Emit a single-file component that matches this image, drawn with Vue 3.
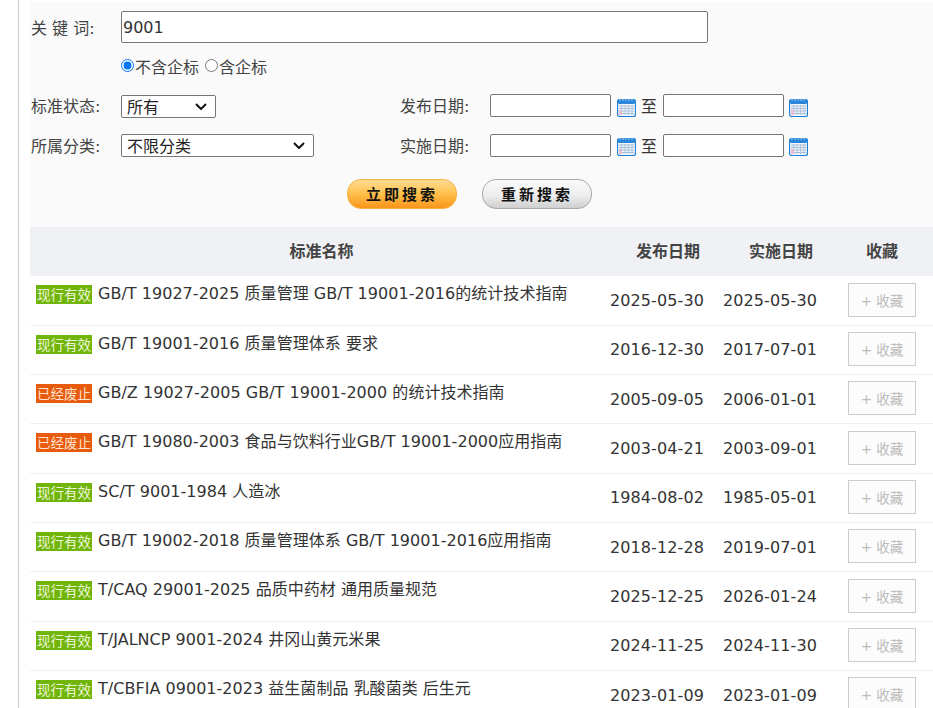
<template>
  <div class="page">
    <form class="search" @submit.prevent>
      <div class="line keyword">
        <label class="lab">关 键 词:</label>
        <input class="kw" type="text" value="9001" />
      </div>
      <div class="line radios">
        <label><input type="radio" name="logo" checked />不含企标</label>
        <label><input type="radio" name="logo" />含企标</label>
      </div>
      <div class="line status">
        <label class="lab">标准状态:</label>
        <div class="pick">
          <div class="sel sel-s">
            <select><option>所有</option></select>
            <svg viewBox="0 0 12 7"><path d="M1 1l5 5 5-5" /></svg>
          </div>
        </div>
        <label class="lab">发布日期:</label>
        <input class="date" type="text" />
        <svg class="cal" viewBox="0 0 19 19"><use href="#cal-icon" /></svg>
        <span class="to">至</span>
        <input class="date" type="text" />
        <svg class="cal cal-last" viewBox="0 0 19 19"><use href="#cal-icon" /></svg>
      </div>
      <div class="line kind">
        <label class="lab">所属分类:</label>
        <div class="pick">
          <div class="sel sel-l">
            <select><option>不限分类</option></select>
            <svg viewBox="0 0 12 7"><path d="M1 1l5 5 5-5" /></svg>
          </div>
        </div>
        <label class="lab">实施日期:</label>
        <input class="date" type="text" />
        <svg class="cal" viewBox="0 0 19 19"><use href="#cal-icon" /></svg>
        <span class="to">至</span>
        <input class="date" type="text" />
        <svg class="cal cal-last" viewBox="0 0 19 19"><use href="#cal-icon" /></svg>
      </div>
      <div class="btns">
        <button class="btn orange">立即搜索</button>
        <button class="btn grey">重新搜索</button>
      </div>
    </form>

    <div class="thead">
      <div class="th-name">标准名称</div>
      <div class="th-pub">发布日期</div>
      <div class="th-imp">实施日期</div>
      <div class="th-fav">收藏</div>
    </div>
    <div v-for="row in rows" class="row">
      <div class="name">
        <span class="badge" :class="{ off: row.off }">{{ row.off ? '已经废止' : '现行有效' }}</span>
        <a>{{ row.title }}</a>
      </div>
      <div class="d">{{ row.pub }}</div>
      <div class="d">{{ row.imp }}</div>
      <div class="fav"><button>+ 收藏</button></div>
    </div>

    <svg width="0" height="0" class="defs">
      <symbol id="cal-icon" viewBox="0 0 19 19">
        <rect x="0.5" y="1.5" width="18" height="17" rx="2" fill="#f2f6fa" stroke="#1f80d8" stroke-width="1.2" />
        <rect x="1" y="1" width="17" height="5" rx="1.500" fill="#2a86d8" />
        <path d="M3 1v2M6 1v2M9 1v2M12 1v2M15 1v2" stroke="#9fcbf0" />
        <path d="M2 8h15M2 10.5h15M2 13h15M2 15.5h15" stroke="#a2bcd8" />
        <path d="M4.500 7v10M8 7v10M11.500 7v10M15 7v10" stroke="#b0c6de" />
        <rect x="2" y="12" width="3" height="5" fill="#e6bccf" />
      </symbol>
    </svg>
  </div>
</template>

<script setup>
const rows = [
  { title: 'GB/T 19027-2025 质量管理 GB/T 19001-2016的统计技术指南', pub: '2025-05-30', imp: '2025-05-30' },
  { title: 'GB/T 19001-2016 质量管理体系 要求', pub: '2016-12-30', imp: '2017-07-01' },
  { title: 'GB/Z 19027-2005 GB/T 19001-2000 的统计技术指南', pub: '2005-09-05', imp: '2006-01-01', off: true },
  { title: 'GB/T 19080-2003 食品与饮料行业GB/T 19001-2000应用指南', pub: '2003-04-21', imp: '2003-09-01', off: true },
  { title: 'SC/T 9001-1984 人造冰', pub: '1984-08-02', imp: '1985-05-01' },
  { title: 'GB/T 19002-2018 质量管理体系 GB/T 19001-2016应用指南', pub: '2018-12-28', imp: '2019-07-01' },
  { title: 'T/CAQ 29001-2025 品质中药材 通用质量规范', pub: '2025-12-25', imp: '2026-01-24' },
  { title: 'T/JALNCP 9001-2024 井冈山黄元米果', pub: '2024-11-25', imp: '2024-11-30' },
  { title: 'T/CBFIA 09001-2023 益生菌制品 乳酸菌类 后生元', pub: '2023-01-09', imp: '2023-01-09' }
]
</script>

<style>
html, body { overflow: hidden; background: #fff; }
</style>

<style scoped>
.page {
  height: 708px;
  overflow: hidden;
  margin-left: 18px;
  padding-left: 11px;
  border-left: 1px solid #ccc;
  box-sizing: border-box;
  font-family: "DejaVu Sans", "Noto Sans CJK SC", sans-serif;
  color: #333;
}
.defs { position: absolute; }
.search {
  margin-top: 2px;
  height: 225px;
  padding: 9px 0 0 1px;
  box-sizing: border-box;
  background: #fafafa;
}
.line { display: flex; align-items: center; }
.lab {
  width: 90px;
  flex: none;
  font-size: 16px;
  color: #444;
}
.kw {
  width: 587px;
  height: 32px;
  box-sizing: border-box;
  padding: 0 1px;
  font: 16px "DejaVu Sans", sans-serif;
  color: #333;
  border: 1px solid #767676;
  border-radius: 2px;
}
.radios {
  margin: 12px 0 0 90px;
  height: 22px;
  font-size: 16px;
  color: #444;
}
.radios label { display: flex; align-items: center; margin-right: 6px; }
.radios input { margin: 0 1px 0 0; width: 13px; height: 13px; position: relative; top: -1px; }
.status { margin-top: 16px; height: 24px; }
.kind { margin-top: 16px; height: 24px; }
.pick { width: 279px; flex: none; }
.sel { position: relative; }
.status .sel { top: 1px; }
.sel select {
  display: block;
  width: 100%;
  height: 23px;
  appearance: none;
  font: 16px/21px "Noto Sans CJK SC", sans-serif;
  color: #222;
  background: #fff;
  border: 1px solid #767676;
  border-radius: 2px;
  padding: 0 0 0 5px;
}
.sel svg {
  position: absolute;
  right: 9px;
  top: 8px;
  width: 12px;
  height: 7px;
  pointer-events: none;
}
.sel path { fill: none; stroke: #111; stroke-width: 2; }
.sel-s { width: 95px; }
.sel-l { width: 193px; }
.date {
  width: 121px;
  height: 23px;
  box-sizing: border-box;
  background: #fff;
  border: 1px solid #767676;
  border-radius: 2px;
}
.cal { width: 19px; height: 19px; margin: 5px 0 0 6px; flex: none; }
.kind .cal { margin-top: 3px; }
.cal-last { margin-left: 5px; }
.to { width: 16px; margin: 0 6px 0 5px; font-size: 16px; color: #333; }
.btns {
  display: flex;
  gap: 25px;
  margin: 22px 0 0 316px;
}
.btn {
  width: 110px;
  height: 30px;
  padding: 0 0 2px;
  font: bold 15px "Noto Sans CJK SC", sans-serif;
  letter-spacing: 3px;
  color: #111;
  border-radius: 14px;
}
.orange {
  border: 1px solid #f8b040;
  background: linear-gradient(#ffdc94, #ffc450 45%, #f9951a);
}
.grey {
  border: 1px solid #aaa;
  background: linear-gradient(#fafafa, #eee 55%, #cfcfcf);
}
.thead {
  display: grid;
  grid-template-columns: 580px 113px 117px 1fr;
  height: 49.4px;
  padding-bottom: 3px;
  box-sizing: border-box;
  align-items: center;
  background: #f0f1f4;
  font-size: 16px;
  font-weight: bold;
  color: #444;
  font-family: "Noto Sans CJK SC", sans-serif;
}
.th-name { text-align: center; padding-left: 3px; }
.th-pub { padding-left: 26px; }
.th-imp { padding-left: 26px; }
.th-fav { padding-left: 26px; }
.row {
  display: grid;
  grid-template-columns: 580px 113px 117px 1fr;
  height: 49.33px;
  box-sizing: border-box;
  align-items: center;
  border-bottom: 1px solid #f0f0f0;
  font-size: 16px;
}
.name {
  align-self: start;
  display: flex;
  align-items: flex-start;
  padding: 9px 0 0 6px;
  white-space: nowrap;
}
.name a { line-height: 15px; margin: 1px 0 0 6px; letter-spacing: 0.03px; }
.d { letter-spacing: 0.1px; }
.badge {
  width: 56px;
  height: 19px;
  line-height: 19px;
  text-align: center;
  font-size: 13.5px;
  color: #eaf7d6;
  background: #72b50a;
  font-family: "Noto Sans CJK SC", sans-serif;
}
.badge.off { background: #e85a0c; color: #fde3d0; }
.fav { padding-left: 8px; margin-top: -2px; }
.fav button {
  display: block;
  width: 68px;
  height: 34px;
  padding: 0;
  font: 13.5px "DejaVu Sans", "Noto Sans CJK SC", sans-serif;
  color: #bbb;
  background: #fcfcfc;
  border: 1px solid #ccc;
}
</style>
